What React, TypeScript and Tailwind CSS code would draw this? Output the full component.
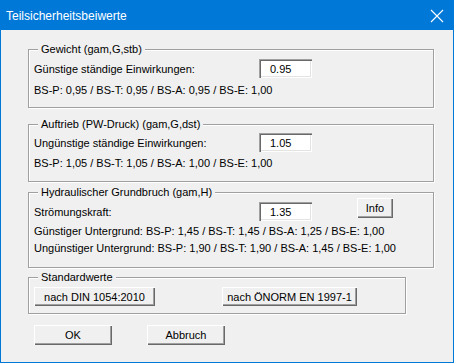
import React from 'react';

const font = { fontFamily: '"Liberation Sans", Arial, sans-serif' };

// sunken edit box
function Field({ value, className = '' }: { value: string; className?: string }) {
  return (
    <div
      className={
        'flex h-[19px] w-[53px] shrink-0 items-center bg-white pl-[11px] text-[11px] text-black shadow-[inset_1px_1px_0_#a0a0a0,inset_2px_2px_0_#696969,inset_-1px_-1px_0_#ffffff,inset_-2px_-2px_0_#e3e3e3] ' +
        className
      }
    >
      {value}
    </div>
  );
}

// raised push button
function Btn({ label, className = '' }: { label: string; className?: string }) {
  return (
    <button
      className={
        'flex items-center justify-center bg-[#f0f0f0] text-[11px] text-black shadow-[inset_1px_1px_0_#ffffff,inset_-1px_-1px_0_#696969,inset_-2px_-2px_0_#a0a0a0] ' +
        className
      }
    >
      {label}
    </button>
  );
}

function Group({
  title,
  className = '',
  children,
}: {
  title: string;
  className?: string;
  children: React.ReactNode;
}) {
  return (
    <div
      className={
        'relative w-[406px] border border-[#a0a0a0] shadow-[1px_1px_0_#ffffff,inset_1px_1px_0_#ffffff] ' + className
      }
    >
      <span className="absolute -top-[8px] left-[9px] bg-[#f0f0f0] px-[3px] text-[11px] leading-[14px]">
        {title}
      </span>
      {children}
    </div>
  );
}

export default function App() {
  return (
    <div
      className="flex h-[363px] w-[454px] flex-col border border-[#0078d7] bg-[#f0f0f0] text-black"
      style={font}
    >
      {/* title bar */}
      <div className="flex h-[29px] shrink-0 items-center bg-[#0078d7] pl-[5px] pr-[8px] text-white">
        <span className="text-[12px]">Teilsicherheitsbeiwerte</span>
        <svg className="ml-auto" width="16" height="16" viewBox="0 0 16 16">
          <path d="M2 2L14 14M14 2L2 14" stroke="#fff" strokeWidth="1.1" />
        </svg>
      </div>

      <div className="flex flex-col pl-[27px] pt-[19px] text-[11px] leading-[14px]">
        <Group title="Gewicht (gam,G,stb)" className="h-[59px]">
          <div className="mt-[9px] flex h-[19px] items-center pl-[5px]">
            <span>Günstige ständige Einwirkungen:</span>
            <Field value="0.95" className="ml-auto mr-[121px]" />
          </div>
          <div className="mt-[5px] pl-[5px]">BS-P: 0,95 / BS-T: 0,95 / BS-A: 0,95 / BS-E: 1,00</div>
        </Group>

        <Group title="Auftrieb (PW-Druck) (gam,G,dst)" className="mt-[16px] h-[58px]">
          <div className="mt-[8px] flex h-[19px] items-center pl-[5px]">
            <span>Ungünstige ständige Einwirkungen:</span>
            <Field value="1.05" className="ml-auto mr-[121px]" />
          </div>
          <div className="mt-[4px] pl-[5px]">BS-P: 1,05 / BS-T: 1,05 / BS-A: 1,00 / BS-E: 1,00</div>
        </Group>

        <Group title="Hydraulischer Grundbruch (gam,H)" className="mt-[10px] h-[76px]">
          <div className="mt-[9px] flex h-[19px] items-center pl-[5px]">
            <span>Strömungskraft:</span>
            <Field value="1.35" className="ml-auto" />
            <Btn label="Info" className="mb-[8px] ml-[45px] mr-[40px] h-[20px] w-[36px]" />
          </div>
          <div className="mt-[3px] flex flex-col gap-[2px] pl-[5px] leading-[15px]">
            <span>Günstiger Untergrund: BS-P: 1,45 / BS-T: 1,45 / BS-A: 1,25 / BS-E: 1,00</span>
            <span>Ungünstiger Untergrund: BS-P: 1,90 / BS-T: 1,90 / BS-A: 1,45 / BS-E: 1,00</span>
          </div>
        </Group>

        <Group title="Standardwerte" className="mt-[9px] h-[37px] !w-[378px]">
          <div className="mt-[9px] flex gap-[67px] pl-[5px]">
            <Btn label="nach DIN 1054:2010" className="h-[19px] w-[121px]" />
            <Btn label="nach ÖNORM EN 1997-1" className="h-[19px] w-[135px]" />
          </div>
        </Group>

        <div className="mt-[11px] flex gap-[35px] pl-[6px]">
          <Btn
            label="OK"
            className="h-[20px] w-[78px] shadow-[inset_1px_1px_0_#ffffff,inset_-1px_-1px_0_#000000,inset_-2px_-2px_0_#696969]"
          />
          <Btn label="Abbruch" className="h-[20px] w-[78px]" />
        </div>
      </div>
    </div>
  );
}
